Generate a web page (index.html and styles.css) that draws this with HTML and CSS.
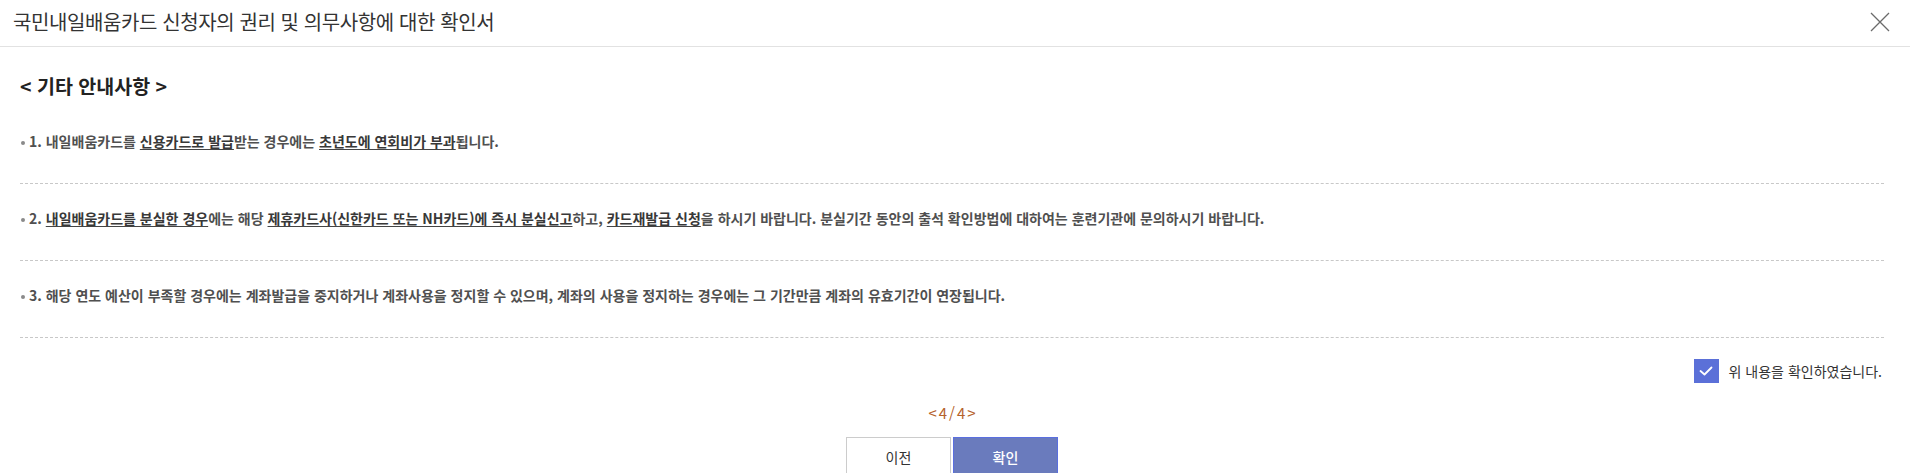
FILE: index.html
```html
<!DOCTYPE html>
<html lang="ko">
<head>
<meta charset="utf-8">
<title>확인서</title>
<link rel="stylesheet" href="styles.css">
</head>
<body>
<div class="modal">
  <header class="modal-header">
    <h1 class="modal-title">국민내일배움카드 신청자의 권리 및 의무사항에 대한 확인서</h1>
    <button class="close-btn" type="button" aria-label="닫기">
      <svg width="20" height="20" viewBox="0 0 20 20"><path d="M1 1 L19 19 M19 1 L1 19" stroke="#6b6b6b" stroke-width="1.3" fill="none"/></svg>
    </button>
  </header>
  <main class="modal-body">
    <h2 class="section-title">&lt; 기타 안내사항 &gt;</h2>
    <ul class="notice-list">
      <li class="notice-item">1. 내일배움카드를 <u>신용카드로 발급</u>받는 경우에는 <u>초년도에 연회비가 부과</u>됩니다.</li>
      <li class="notice-item">2. <u>내일배움카드를 분실한 경우</u>에는 해당 <u>제휴카드사(신한카드 또는 NH카드)에 즉시 분실신고</u>하고, <u>카드재발급 신청</u>을 하시기 바랍니다. 분실기간 동안의 출석 확인방법에 대하여는 훈련기관에 문의하시기 바랍니다.</li>
      <li class="notice-item">3. 해당 연도 예산이 부족할 경우에는 계좌발급을 중지하거나 계좌사용을 정지할 수 있으며, 계좌의 사용을 정지하는 경우에는 그 기간만큼 계좌의 유효기간이 연장됩니다.</li>
    </ul>
    <label class="confirm-row">
      <span class="checkbox">
        <svg width="14" height="10" viewBox="0 0 14 10"><path d="M1.5 5 L5.5 8.5 L12.5 1.5" stroke="#fff" stroke-width="1.8" fill="none" stroke-linecap="round" stroke-linejoin="round"/></svg>
      </span>
      <span class="confirm-text">위 내용을 확인하였습니다.</span>
    </label>
    <div class="pager">&lt;4/4&gt;</div>
    <div class="actions">
      <button class="btn btn-prev" type="button">이전</button>
      <button class="btn btn-ok" type="button">확인</button>
    </div>
  </main>
</div>
</body>
</html>
```

FILE: styles.css
```css
* { box-sizing: border-box; }
html, body { margin: 0; padding: 0; background: #fff; }
body {
  font-family: "Noto Sans CJK KR", "Noto Sans", sans-serif;
  color: #333;
  overflow: hidden;
}
.modal { width: 1910px; }
.modal-header {
  height: 47px;
  border-bottom: 1px solid #e2e2e2;
  display: flex;
  align-items: center;
  justify-content: space-between;
  padding: 0 20px 2px 13px;
}
.modal-title {
  margin: 0;
  font-size: 20px;
  font-weight: 400;
  letter-spacing: -0.4px;
  color: #333;
  line-height: 26px;
}
.close-btn {
  border: 0;
  background: none;
  padding: 0;
  width: 20px;
  height: 20px;
  display: flex;
}
.modal-body { padding: 0 26px 0 20px; }
.section-title {
  margin: 26px 0 8px;
  font-size: 19.5px;
  font-weight: 700;
  letter-spacing: 0;
  line-height: 26px;
  color: #222;
}
.notice-list { list-style: none; margin: 0; padding: 0; }
.notice-item {
  position: relative;
  padding: 24px 0 31px 9px;
  line-height: 21px;
  font-size: 14px;
  font-weight: 600;
  letter-spacing: 0;
  color: #505050;
  border-bottom: 1px dashed #c8c8c8;
}
.notice-item::before {
  content: "";
  position: absolute;
  left: 1px;
  top: 34px;
  width: 4px;
  height: 4px;
  border-radius: 50%;
  background: #8a8a8a;
}
.notice-item u {
  color: #383838;
  text-decoration-color: #444;
  text-underline-offset: 2px;
}
.confirm-row {
  display: flex;
  justify-content: flex-end;
  align-items: center;
  gap: 10px;
  margin-top: 21px;
  height: 24px;
}
.checkbox {
  width: 25px;
  height: 24px;
  background: #5b70d8;
  display: flex;
  align-items: center;
  justify-content: center;
}
.confirm-text {
  font-size: 14px;
  letter-spacing: 0;
  color: #333;
  padding-right: 2px;
}
.pager {
  text-align: center;
  margin-top: 20px;
  font-size: 15px;
  line-height: 20px;
  color: #b5622b;
  letter-spacing: 2px;
  padding-left: 2px;
}
.actions {
  display: flex;
  justify-content: center;
  gap: 2px;
  margin-top: 14px;
}
.btn {
  width: 105px;
  height: 40px;
  font-family: inherit;
  font-size: 14px;
  cursor: pointer;
}
.btn-prev { background: #fff; border: 1px solid #cccccc; color: #333; }
.btn-ok { background: #6a7bbd; border: 1px solid #5a6fe0; color: #fff; font-weight: 500; }
```
